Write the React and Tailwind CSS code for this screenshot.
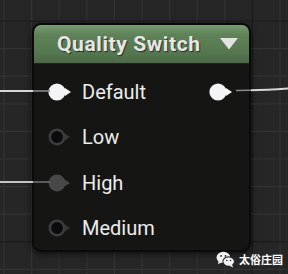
import React from 'react';

const GRID = 27.6;

const GridBackground = () => {
  const xs = [];
  const ys = [];
  for (let i = 0; i < 12; i++) xs.push(4 + GRID * i);
  for (let i = -1; i < 10; i++) ys.push(21 + GRID * i);
  return (
    <svg className="absolute inset-0" width="288" height="274">
      {xs.map((x, i) => (
        <line key={'x' + i} x1={x} y1="0" x2={x} y2="274" stroke={i === 9 ? '#1a1a1a' : '#333333'} strokeWidth="1.2" />
      ))}
      {ys.map((y, i) => (
        <line key={'y' + i} x1="0" y1={y} x2="288" y2={y} stroke={i === 1 || i === 9 ? '#1a1a1a' : '#333333'} strokeWidth="1.2" />
      ))}
    </svg>
  );
};

const Pin = ({ kind }) => {
  if (kind === 'exec') {
    return (
      <svg width="26" height="20" viewBox="0 0 26 20">
        <circle cx="9" cy="10" r="8.6" fill="#f4f4f4" />
        <polygon points="17,6 23,10 17,14" fill="#f4f4f4" />
      </svg>
    );
  }
  if (kind === 'linked') {
    return (
      <svg width="26" height="20" viewBox="0 0 26 20">
        <circle cx="9" cy="10" r="8.4" fill="#484848" />
        <polygon points="16.5,6.5 22,10 16.5,13.5" fill="#484848" />
      </svg>
    );
  }
  return (
    <svg width="26" height="20" viewBox="0 0 26 20">
      <circle cx="9" cy="10" r="7.2" fill="#0b0b0b" stroke="#3c3c3c" strokeWidth="2.6" />
      <polygon points="16.8,6.5 22,10 16.8,13.5" fill="#383838" />
    </svg>
  );
};

const rows = [
  { label: 'Default', kind: 'exec', out: true },
  { label: 'Low', kind: 'empty' },
  { label: 'High', kind: 'linked' },
  { label: 'Medium', kind: 'empty' },
];

const Wires = () => (
  <svg className="absolute inset-0 pointer-events-none" width="288" height="274">
    <line x1="0" y1="91" x2="33" y2="91" stroke="#d6d6d6" strokeWidth="2" />
    <line x1="33" y1="91" x2="50" y2="91" stroke="#8a8a8a" strokeWidth="1.6" />
    <line x1="0" y1="182" x2="33" y2="182" stroke="#c4c4c4" strokeWidth="2" />
    <line x1="33" y1="182" x2="50" y2="182" stroke="#6e6e6e" strokeWidth="1.6" />
    <path d="M236 90.5 L251 90.3" stroke="#8a8a8a" strokeWidth="1.6" fill="none" />
    <path d="M251 90.3 C265 90 276 89.3 288 88.5" stroke="#d6d6d6" strokeWidth="2" fill="none" />
  </svg>
);

const WeChatIcon = () => (
  <svg width="19" height="17" viewBox="0 0 18 16">
    <ellipse cx="7" cy="6" rx="6.5" ry="5.3" fill="#f2f2f2" />
    <polygon points="2.5,9 2,12.5 5.5,10.5" fill="#f2f2f2" />
    <ellipse cx="12" cy="10" rx="5.5" ry="4.5" fill="#f2f2f2" stroke="#262626" strokeWidth="1" />
    <polygon points="15,13 16.5,15.5 12.5,14" fill="#f2f2f2" />
    <circle cx="4.8" cy="4.6" r="0.9" fill="#262626" />
    <circle cx="9" cy="4.6" r="0.9" fill="#262626" />
    <circle cx="10.3" cy="9" r="0.7" fill="#262626" />
    <circle cx="13.7" cy="9" r="0.7" fill="#262626" />
  </svg>
);

export default function App() {
  return (
    <div className="relative w-[288px] h-[274px] overflow-hidden bg-[#262626] font-['Roboto','Liberation_Sans',sans-serif]">
      <GridBackground />

      <div className="absolute left-[32px] top-[23px] w-[219px] h-[229px] rounded-[9px] border-2 border-[#0a0a0a] bg-[#151614] shadow-[0_2px_6px_rgba(0,0,0,0.6)] overflow-hidden flex flex-col">
        <div className="h-[39px] shrink-0 flex items-center justify-between pl-[23px] pr-[11px] bg-[linear-gradient(180deg,#7a9c74_0%,#5f8259_25%,#567850_70%,#4b6946_100%)] border-b border-[#1c241b]">
          <span className="text-[21px] font-bold text-[#e6e6e6] tracking-[0.6px] [text-shadow:1px_1px_1px_rgba(0,0,0,0.6)] leading-none">
            Quality Switch
          </span>
          <svg width="18" height="12" viewBox="0 0 18 12">
            <polygon points="0,0 18,0 9,11.5" fill="#e2e2e2" />
          </svg>
        </div>
        <div className="flex-1 flex flex-col pt-[5px]">
          {rows.map((r) => (
            <div key={r.label} className="h-[45.5px] flex items-center pl-[14px] pr-[14px]">
              <Pin kind={r.kind} />
              <span className="ml-[8px] text-[20px] text-[#ececec] leading-none">{r.label}</span>
              {r.out && (
                <div className="ml-auto">
                  <Pin kind="exec" />
                </div>
              )}
            </div>
          ))}
        </div>
      </div>

      <Wires />

      <div className="absolute left-[216px] top-[251px] flex items-center gap-[4px]">
        <WeChatIcon />
        <span className="text-[11px] font-bold text-white font-['Noto_Sans_CJK_SC',sans-serif] leading-none">太俗庄园</span>
      </div>
    </div>
  );
}
